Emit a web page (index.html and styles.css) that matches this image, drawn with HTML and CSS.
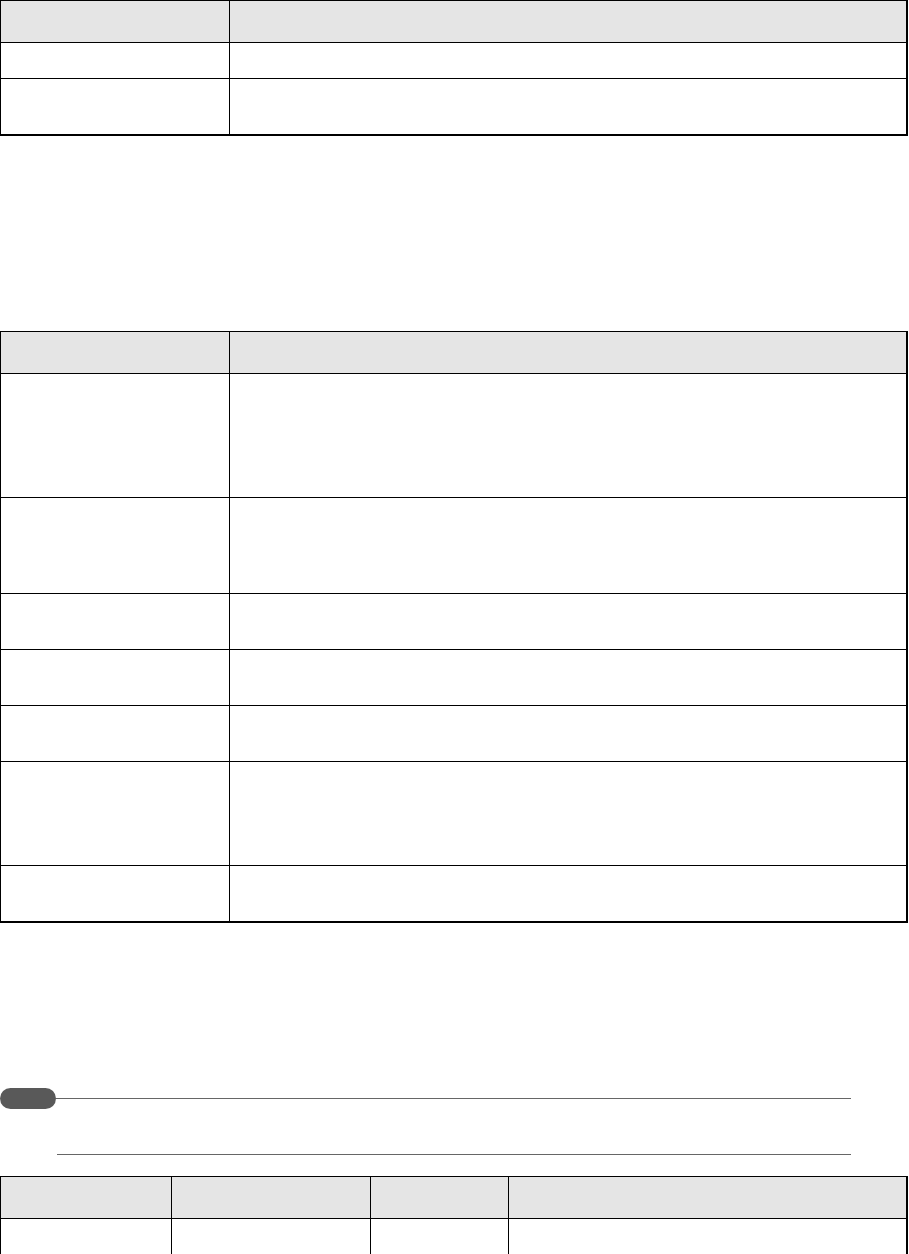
FILE: index.html
```html
<!DOCTYPE html>
<html>
<head>
<meta charset="utf-8">
<link rel="stylesheet" href="styles.css">
</head>
<body>
<div class="page">
  <table class="grid grid-two first">
    <colgroup><col class="c-key"><col></colgroup>
    <tr class="head h42"><th></th><th></th></tr>
    <tr class="h36"><td></td><td></td></tr>
    <tr class="h56"><td></td><td></td></tr>
  </table>

  <table class="grid grid-two second">
    <colgroup><col class="c-key"><col></colgroup>
    <tr class="head h42"><th></th><th></th></tr>
    <tr class="h124"><td></td><td></td></tr>
    <tr class="h96"><td></td><td></td></tr>
    <tr class="h56"><td></td><td></td></tr>
    <tr class="h56"><td></td><td></td></tr>
    <tr class="h56"><td></td><td></td></tr>
    <tr class="h104"><td></td><td></td></tr>
    <tr class="h56"><td></td><td></td></tr>
  </table>

  <div class="note">
    <div class="note-head">
      <span class="pill"></span>
      <span class="rule"></span>
    </div>
    <div class="note-rule"></div>
  </div>

  <table class="grid grid-four third">
    <colgroup><col class="c1"><col class="c2"><col class="c3"><col></colgroup>
    <tr class="head h42"><th></th><th></th><th></th><th></th></tr>
    <tr class="h36"><td></td><td></td><td></td><td></td></tr>
  </table>
</div>
</body>
</html>
```

FILE: styles.css
```css
html, body {
  margin: 0;
  padding: 0;
  background: #fff;
  font-family: "Liberation Sans", Arial, sans-serif;
}

.page {
  width: 909px;
}

.grid {
  width: 908px;
  border-collapse: collapse;
  table-layout: fixed;
  border-right: 2px solid #000;
  border-bottom: 2px solid #000;
}

.grid th,
.grid td {
  border: 1px solid #000;
  padding: 0;
}

.grid .head th {
  background: #e5e5e5;
}

.c-key { width: 229px; }
.c1 { width: 171px; }
.c2 { width: 199px; }
.c3 { width: 138px; }

.h36 td { height: 35px; }
.h42 th { height: 41px; }
.h56 td { height: 55px; }
.h96 td { height: 95px; }
.h104 td { height: 103px; }
.h124 td { height: 123px; }

.first { margin: 0; }
.second { margin-top: 195px; }

.note {
  margin-top: 165px;
  width: 851px;
}

.note-head {
  display: flex;
  align-items: center;
}

.pill {
  width: 56px;
  height: 21px;
  border-radius: 11px;
  background: #595959;
  flex: none;
}

.rule {
  flex: 1;
  height: 1px;
  background: #666;
}

.note-rule {
  margin-top: 45px;
  margin-left: 57px;
  height: 1px;
  background: #666;
}

.third { margin-top: 21px; }
```
